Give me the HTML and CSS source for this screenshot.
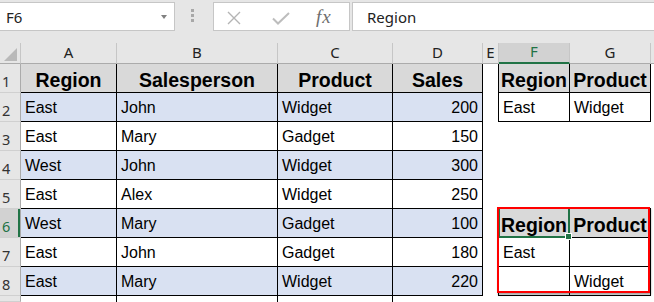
FILE: index.html
```html
<!DOCTYPE html>
<html lang="en">
<head>
    <meta charset="UTF-8">
    <title>Sales sheet</title>
    <link rel="stylesheet" href="styles.css">
</head>
<body>
    <div class="bar">
        <div class="namebox"><span>F6</span><span class="caret"></span></div>
        <div class="grip"><i></i><i></i><i></i></div>
        <div class="fbtns">
            <svg class="ico-x" width="14" height="14" viewBox="0 0 14 14"><path d="M1 1L13 13M13 1L1 13" stroke="#b4b4b4" stroke-width="1.4" fill="none"/></svg>
            <svg class="ico-ok" width="18" height="13" viewBox="0 0 18 13"><path d="M1 6.5L6 11.5L17 1" stroke="#bdbdbd" stroke-width="2" fill="none"/></svg>
            <span class="fx">fx</span>
        </div>
        <div class="formula">Region</div>
    </div>

    <div class="sheet">
        <div class="grid">
            <!-- column headers -->
            <div class="corner"><svg width="20" height="20" viewBox="0 0 20 20"><polygon points="4,18 17,18 17,5" fill="#b9b9b9"/></svg></div>
            <div class="ch">A</div>
            <div class="ch">B</div>
            <div class="ch">C</div>
            <div class="ch">D</div>
            <div class="ch">E</div>
            <div class="ch sel">F</div>
            <div class="ch">G</div>
            <div class="ch last"></div>

            <!-- row 1 -->
            <div class="rh">1</div>
            <div class="t hd">Region</div>
            <div class="t hd">Salesperson</div>
            <div class="t hd">Product</div>
            <div class="t hd">Sales</div>
            <div class="er"></div>
            <div class="t hd">Region</div>
            <div class="t hd">Product</div>
            <div></div>

            <!-- row 2 -->
            <div class="rh">2</div>
            <div class="t bd">East</div>
            <div class="t bd">John</div>
            <div class="t bd">Widget</div>
            <div class="t bd r">200</div>
            <div class="er"></div>
            <div class="t">East</div>
            <div class="t">Widget</div>
            <div></div>

            <!-- row 3 -->
            <div class="rh">3</div>
            <div class="t">East</div>
            <div class="t">Mary</div>
            <div class="t">Gadget</div>
            <div class="t r">150</div>
            <div></div>
            <div></div>
            <div></div>
            <div></div>

            <!-- row 4 -->
            <div class="rh">4</div>
            <div class="t bd">West</div>
            <div class="t bd">John</div>
            <div class="t bd">Widget</div>
            <div class="t bd r">300</div>
            <div></div>
            <div></div>
            <div></div>
            <div></div>

            <!-- row 5 -->
            <div class="rh">5</div>
            <div class="t">East</div>
            <div class="t">Alex</div>
            <div class="t">Widget</div>
            <div class="t r">250</div>
            <div></div>
            <div class="eb"></div>
            <div class="eb"></div>
            <div></div>

            <!-- row 6 -->
            <div class="rh sel">6</div>
            <div class="t bd">West</div>
            <div class="t bd">Mary</div>
            <div class="t bd">Gadget</div>
            <div class="t bd r">100</div>
            <div class="er"></div>
            <div class="t hd">Region</div>
            <div class="t hd">Product</div>
            <div></div>

            <!-- row 7 -->
            <div class="rh">7</div>
            <div class="t">East</div>
            <div class="t">John</div>
            <div class="t">Gadget</div>
            <div class="t r">180</div>
            <div class="er"></div>
            <div class="t">East</div>
            <div class="t"></div>
            <div></div>

            <!-- row 8 -->
            <div class="rh">8</div>
            <div class="t bd">East</div>
            <div class="t bd">Mary</div>
            <div class="t bd">Widget</div>
            <div class="t bd r">220</div>
            <div class="er"></div>
            <div class="t"></div>
            <div class="t">Widget</div>
            <div></div>

            <!-- row 9, only its top shows -->
            <div class="rh"></div>
            <div class="er"></div>
            <div class="er"></div>
            <div class="er"></div>
            <div></div>
            <div></div>
            <div></div>
            <div></div>
            <div></div>
        </div>

        <div class="cursor"><span class="handle"></span></div>
        <div class="frame"></div>
    </div>
</body>
</html>
```

FILE: styles.css
```css
body {
    margin: 0;
    background: #fff;
    font-family: "Liberation Sans", Arial, sans-serif;
    overflow: hidden;
}

/* formula bar */
.bar {
    height: 43px;
    box-sizing: border-box;
    padding-top: 2px;
    background: #e6e6e6;
    display: flex;
    align-items: flex-start;
    font-family: "Noto Sans", sans-serif;
    font-size: 15px;
    color: #222;
}
.namebox {
    margin-left: -1px;
    width: 176px;
    height: 29px;
    box-sizing: border-box;
    background: #fff;
    border: 1px solid #c6c6c6;
    display: flex;
    align-items: center;
    padding-left: 6px;
}
.caret {
    margin-left: auto;
    margin-right: 7px;
    margin-top: 1px;
    border-left: 3.5px solid transparent;
    border-right: 3.5px solid transparent;
    border-top: 4px solid #808080;
}
.grip {
    width: 38px;
    box-sizing: border-box;
    padding-left: 16px;
    margin-top: 7px;
    display: flex;
    flex-direction: column;
    gap: 2px;
}
.grip i {
    width: 3px;
    height: 3px;
    background: #a8a8a8;
}
.fbtns {
    width: 137px;
    height: 29px;
    box-sizing: border-box;
    background: #fff;
    border: 1px solid #c6c6c6;
    display: flex;
    align-items: center;
    padding-left: 13px;
}
.ico-x {
    margin-top: 3px;
}
.ico-ok {
    margin-left: 31px;
    margin-top: 3px;
}
.fx {
    margin-left: 26px;
    font-family: "Liberation Serif", serif;
    font-style: italic;
    font-size: 19px;
    letter-spacing: 1px;
    color: #6e6e6e;
}
.formula {
    flex: 1;
    margin-left: 2px;
    margin-right: -2px;
    height: 29px;
    box-sizing: border-box;
    background: #fff;
    border: 1px solid #c6c6c6;
    display: flex;
    align-items: center;
    padding-left: 14px;
}

/* sheet grid */
.sheet {
    position: relative;
}
.grid {
    display: grid;
    grid-template-columns: 21px 96px 161px 115px 90px 16px 71px 81px 1fr;
    grid-template-rows: 21px repeat(8, 29px) 6px;
}
.grid > div {
    box-sizing: border-box;
    display: flex;
    align-items: flex-end;
    padding: 0 4px 4px;
    white-space: nowrap;
    font-size: 16px;
    line-height: 18px;
    color: #000;
}
.grid > .corner {
    padding: 0;
    background: #e6e6e6;
    border-right: 1px solid #c6c6c6;
    border-bottom: 1px solid #ababab;
}
.grid > .ch {
    justify-content: center;
    padding: 0 0 1px;
    background: #e6e6e6;
    border-right: 1px solid #c6c6c6;
    border-bottom: 1px solid #ababab;
    font-family: "Noto Sans", sans-serif;
    font-size: 15px;
    line-height: 20px;
    color: #222;
}
.grid > .ch.sel {
    background: #d2d2d2;
    color: #217346;
    border-bottom: 2px solid #217346;
}
.grid > .ch.last {
    border-right: none;
}
.grid > .rh {
    padding: 0 0 1px 2px;
    background: #e6e6e6;
    border-right: 1px solid #ababab;
    border-bottom: 1px solid #d0d0d0;
    font-family: "Noto Sans", sans-serif;
    font-size: 14.5px;
    line-height: 20px;
    color: #333;
}
.grid > .rh.sel {
    background: #d2d2d2;
    color: #217346;
    box-shadow: inset -2px 0 0 #217346;
}

/* bordered table cells */
.grid > .t {
    border-right: 1px solid #000;
    border-bottom: 1px solid #000;
}
.grid > .hd {
    justify-content: center;
    padding: 0 0 1px;
    background: #d9d9d9;
    font-weight: bold;
    font-size: 19.5px;
    line-height: 22px;
}
.grid > .bd {
    background: #d9e1f2;
}
.grid > .r {
    justify-content: flex-end;
}
.grid > .er {
    border-right: 1px solid #000;
}
.grid > .eb {
    border-bottom: 1px solid #000;
}

/* active cell and criteria frame */
.cursor {
    position: absolute;
    left: 498px;
    top: 164px;
    width: 72px;
    height: 31px;
    box-sizing: border-box;
    border: 2px solid #217346;
}
.handle {
    position: absolute;
    right: -4px;
    bottom: -4px;
    width: 5px;
    height: 5px;
    background: #217346;
    border: 1px solid #fff;
}
.frame {
    position: absolute;
    left: 497px;
    top: 164px;
    width: 153px;
    height: 86px;
    box-sizing: border-box;
    border: 2px solid #f00;
    box-shadow: 1px 2px 2px rgba(0, 0, 0, 0.35);
}
```
